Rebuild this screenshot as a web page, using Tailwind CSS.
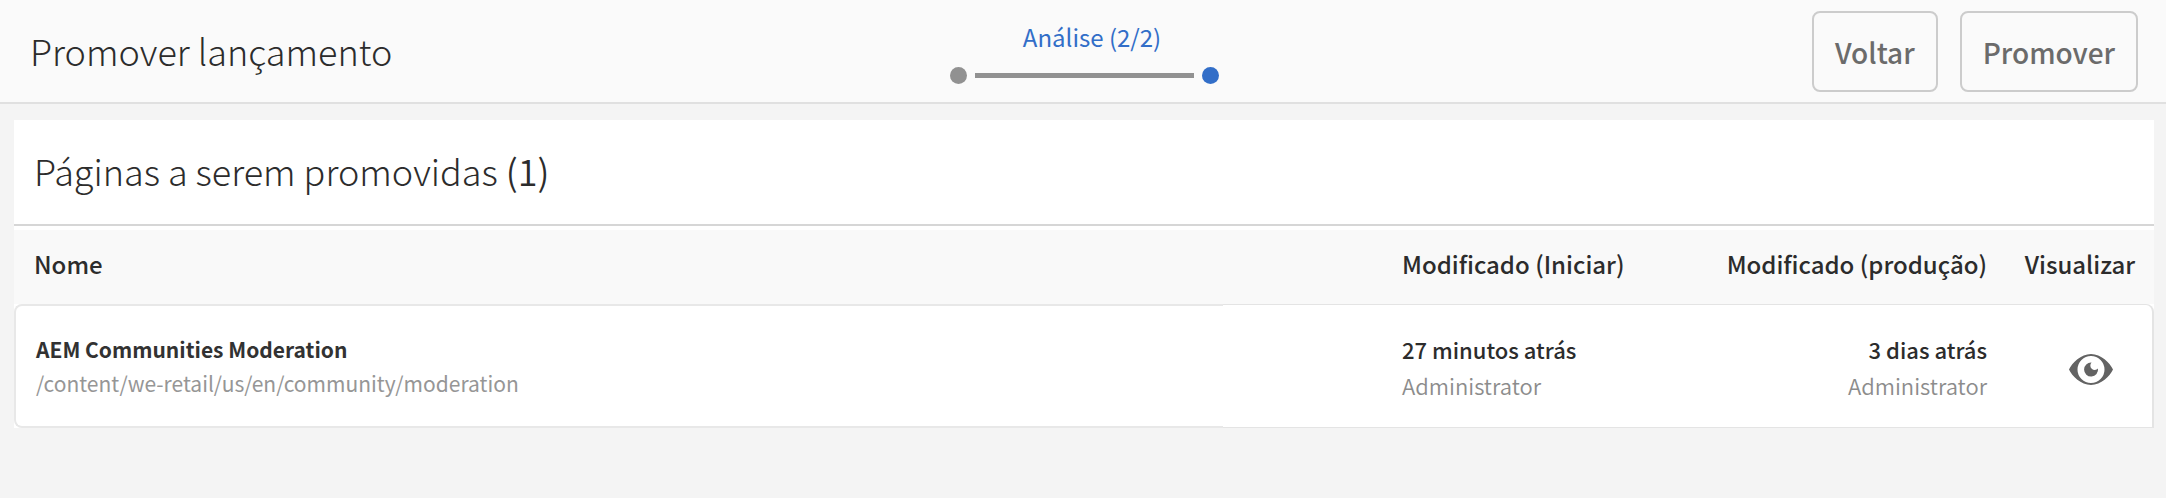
<!DOCTYPE html>
<html lang="pt-BR">
<head>
<meta charset="utf-8">
<meta name="viewport" content="width=device-width, initial-scale=1">
<title>Promover lançamento</title>
<script src="https://cdn.jsdelivr.net/npm/@tailwindcss/browser@4"></script>
</head>
<body class="min-h-screen bg-[#f4f4f4] font-['Noto_Sans_CJK_SC','Noto_Sans',sans-serif] text-[#2c2c2c]">
<header class="grid grid-cols-[1fr_auto_1fr] items-center border-b-2 border-[#e0e0e0] bg-[#fafafa] pl-[30px] pr-7">
  <h1 class="pb-[2px] text-[36px] leading-[50px] font-light">Promover lançamento</h1>
  <div class="flex flex-col items-center gap-[14px] pt-[2px]">
    <p class="pl-4 text-[24px] leading-8 text-[#326ec8]">Análise (2/2)</p>
    <div class="flex items-center gap-2">
      <span class="size-[17px] rounded-full bg-[#919191]"></span>
      <span class="h-[5px] w-[219px] bg-[#919191]"></span>
      <span class="size-[17px] rounded-full bg-[#326ec8]"></span>
    </div>
  </div>
  <div class="flex justify-end gap-[22px] pt-[11px] pb-[10px]">
    <button type="button" class="h-[81px] rounded-lg border-2 border-[#cccccc] px-[21px] text-[28px] font-medium text-[#6b6b6b]">Voltar</button>
    <button type="button" class="h-[81px] rounded-lg border-2 border-[#cccccc] px-[21px] text-[28px] font-medium text-[#6b6b6b]">Promover</button>
  </div>
</header>
<main class="mt-4 mr-3 ml-[14px]">
  <h2 class="border-b-2 border-[#d6d6d6] bg-white pt-[25px] pb-[29px] pl-5 text-[36px] leading-[50px] font-light">Páginas a serem promovidas <span class="font-[350]">(1)</span></h2>
  <div class="bg-white pt-1">
    <table class="w-full table-fixed border-separate border-spacing-0">
      <colgroup><col><col class="w-[440px]"><col class="w-[324px]"><col class="w-[167px]"></colgroup>
      <thead class="bg-[#f9f9f9] text-left text-[24px] leading-8">
        <tr class="h-[74px]">
          <th scope="col" class="pb-[6px] pl-5 font-medium">Nome</th>
          <th scope="col" class="pb-[6px] pl-[179px] font-medium whitespace-nowrap">Modificado (Iniciar)</th>
          <th scope="col" class="pb-[6px] text-right font-medium whitespace-nowrap">Modificado (produção)</th>
          <th scope="col" class="pr-[19px] pb-[6px] text-right font-medium">Visualizar</th>
        </tr>
      </thead>
      <tbody class="bg-white text-[22px]">
        <tr class="h-[124px]">
          <td class="rounded-l-lg border-y-2 border-l-2 border-[#e8e8e8] pl-5 text-[21px] leading-[34px]">
            <p class="font-bold text-[#323232]">AEM Communities Moderation</p>
            <p class="text-[#969696]">/content/we-retail/us/en/community/moderation</p>
          </td>
          <td class="border-y border-[#e4e4e4] pt-[2px] pl-[179px] leading-9">
            <p class="font-medium">27 minutos atrás</p>
            <p class="font-[350] text-[#8c8c8c]">Administrator</p>
          </td>
          <td class="border-y border-[#e4e4e4] pt-[2px] text-right leading-9">
            <p class="font-medium">3 dias atrás</p>
            <p class="font-[350] text-[#8c8c8c]">Administrator</p>
          </td>
          <td class="rounded-tr-lg border-y border-r-2 border-[#e4e4e4] pt-[6px] pr-[39px]">
            <button type="button" aria-label="Visualizar AEM Communities Moderation" class="ml-auto block">
              <svg class="h-[31px] w-11" viewBox="0 0 44 31" fill="#636363" aria-hidden="true">
                <path fill-rule="evenodd" d="M0 15.500C3 9 12 0 22 0s19 9 22 15.500C41 22 32 31 22 31S3 22 0 15.500ZM22 2A13.500 13.500 0 1 0 22 29A13.500 13.500 0 1 0 22 2Z"/>
                <path d="M22.500 8.500A7 7 0 1 0 29 14.500A4 4 0 0 1 22.500 8.500Z"/>
              </svg>
            </button>
          </td>
        </tr>
      </tbody>
    </table>
  </div>
</main>
</body>
</html>
